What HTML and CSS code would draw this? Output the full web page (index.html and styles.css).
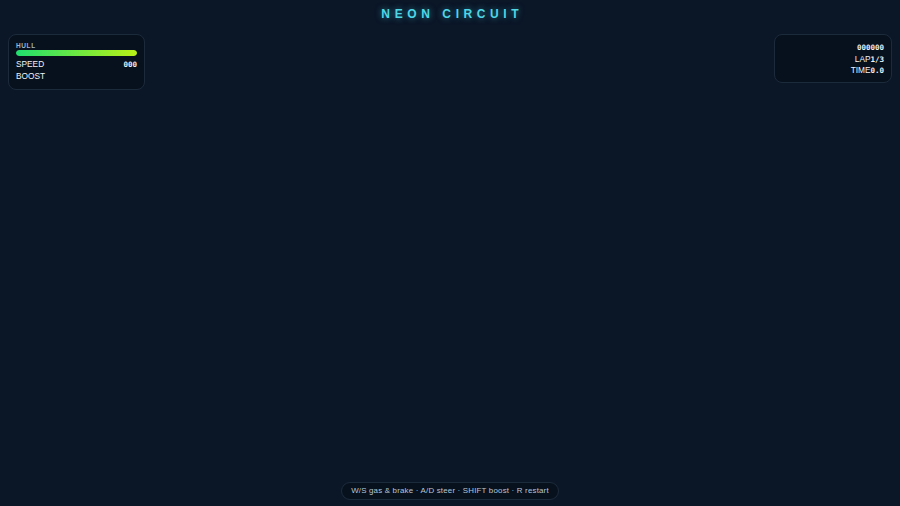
FILE: index.html
```html
<!DOCTYPE html>
<html>
<head>
<meta charset="utf-8">
<link rel="stylesheet" href="styles.css">
</head>
<body>
<div class="screen">
  <div class="top">
    <div class="panel left">
      <div class="label">HULL</div>
      <div class="bar"><div class="fill" style="width:100%"></div></div>
      <div class="row"><span>SPEED</span><span class="mono">000</span></div>
      <div class="row"><span>BOOST</span></div>
    </div>
    <div class="title">NEON CIRCUIT</div>
    <div class="panel right">
      <div class="rrow"><span class="mono">000000</span></div>
      <div class="rrow"><span>LAP</span><span class="mono">1/3</span></div>
      <div class="rrow"><span>TIME</span><span class="mono">0.0</span></div>
    </div>
  </div>
  <div class="bottom">
    <div class="hint">W/S gas &amp; brake · A/D steer · SHIFT boost · R restart</div>
  </div>
</div>
</body>
</html>
```
FILE: styles.css
```css
html, body {
  margin: 0;
  padding: 0;
  background: #0b1627;
  width: 900px;
  height: 506px;
  overflow: hidden;
  font-family: "Liberation Sans", Arial, sans-serif;
  color: #e6eef6;
}
.screen {
  width: 900px;
  height: 506px;
  display: flex;
  flex-direction: column;
  justify-content: space-between;
  background: #0b1627;
}
.top {
  display: flex;
  justify-content: space-between;
  align-items: flex-start;
  padding: 0 8px;
  position: relative;
}
.title {
  position: absolute;
  left: 0;
  right: 0;
  top: 7px;
  text-align: center;
  font-size: 12px;
  font-weight: bold;
  letter-spacing: 4.6px;
  padding-left: 4.6px;
  color: #4fd6e6;
  text-shadow: 0 0 6px rgba(60, 210, 235, 0.6);
}
.panel {
  margin-top: 34px;
  background: rgba(6, 14, 24, 0.55);
  border: 1px solid #1c2b3b;
  border-radius: 8px;
  box-sizing: border-box;
}
.left {
  width: 137px;
  height: 56px;
  padding: 7px 7px 0 7px;
}
.label {
  font-size: 6.5px;
  font-weight: bold;
  letter-spacing: 0.6px;
  color: #9fb6cc;
  line-height: 7px;
}
.bar {
  margin-top: 1px;
  height: 6px;
  border-radius: 3px;
  background: #15222f;
  overflow: hidden;
}
.fill {
  height: 100%;
  border-radius: 3px;
  background: linear-gradient(90deg, #1fe06e, #b8f016);
}
.row {
  display: flex;
  justify-content: space-between;
  font-size: 8.3px;
  line-height: 11.5px;
  color: #eef3f8;
}
.bar + .row { margin-top: 3px; }
.mono {
  font-family: "DejaVu Sans Mono", "Liberation Mono", monospace;
  font-weight: bold;
  font-size: 7.5px;
}
.right {
  width: 118px;
  height: 49px;
  padding: 7px 7px 0 7px;
}
.rrow {
  display: flex;
  justify-content: flex-end;
  font-size: 8.3px;
  line-height: 11.5px;
  color: #eef3f8;
}
.bottom {
  display: flex;
  justify-content: center;
  padding-bottom: 6px;
}
.hint {
  font-size: 7.9px;
  color: #b6c6d6;
  letter-spacing: 0.2px;
  padding: 3px 9px;
  border: 1px solid #1c2b3b;
  border-radius: 9px;
  background: rgba(6, 14, 24, 0.55);
  line-height: 10px;
}
```
